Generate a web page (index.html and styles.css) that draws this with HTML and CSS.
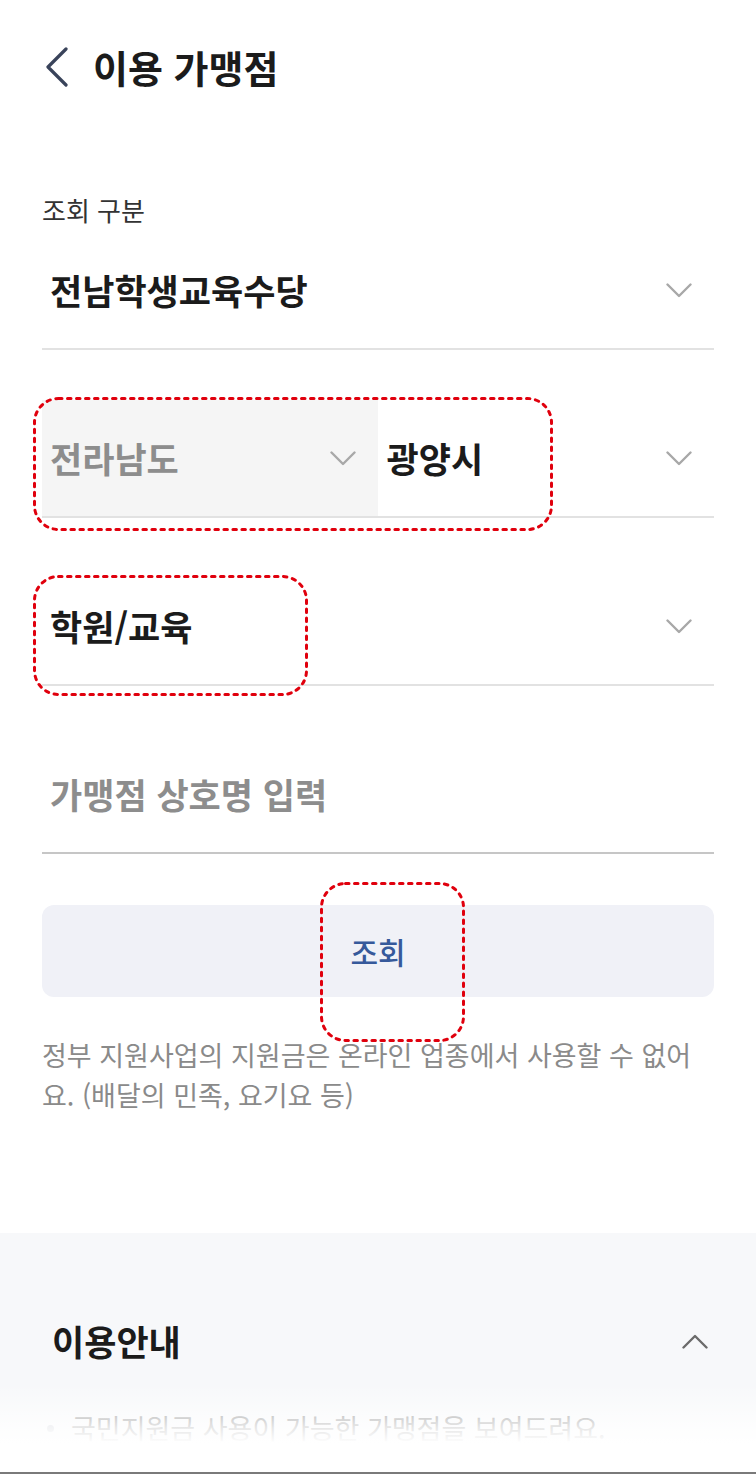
FILE: index.html
```html
<!DOCTYPE html>
<html lang="ko">
<head>
<meta charset="utf-8">
<title>이용 가맹점</title>
<link rel="stylesheet" href="styles.css">
</head>
<body>
<div class="page">
  <header class="top">
    <svg class="back" width="26" height="40" viewBox="0 0 26 40" aria-hidden="true">
      <path d="M22 2 L4 20 L22 38" fill="none" stroke="#39435a" stroke-width="3.2" stroke-linecap="round" stroke-linejoin="round"/>
    </svg>
    <h1 class="title">이용 가맹점</h1>
  </header>

  <main class="form">
    <div class="label">조회 구분</div>
    <div class="field">
      <div class="cell">
        <span class="value">전남학생교육수당</span>
        <svg class="chev" width="26" height="15" viewBox="0 0 26 15"><path d="M1.5 1.5 L13 13 L24.5 1.5"/></svg>
      </div>
    </div>

    <div class="field gap">
      <div class="cell disabled">
        <span class="value muted">전라남도</span>
        <svg class="chev" width="26" height="15" viewBox="0 0 26 15"><path d="M1.5 1.5 L13 13 L24.5 1.5"/></svg>
      </div>
      <div class="cell">
        <span class="value">광양시</span>
        <svg class="chev" width="26" height="15" viewBox="0 0 26 15"><path d="M1.5 1.5 L13 13 L24.5 1.5"/></svg>
      </div>
    </div>

    <div class="field gap">
      <div class="cell">
        <span class="value">학원/교육</span>
        <svg class="chev" width="26" height="15" viewBox="0 0 26 15"><path d="M1.5 1.5 L13 13 L24.5 1.5"/></svg>
      </div>
    </div>

    <div class="field gap input">
      <div class="cell">
        <span class="value muted">가맹점 상호명 입력</span>
      </div>
    </div>

    <button class="search" type="button">조회</button>

    <p class="note">정부 지원사업의 지원금은 온라인 업종에서 사용할 수 없어요. (배달의 민족, 요기요 등)</p>
  </main>

  <section class="guide">
    <div class="guide-head">
      <h2 class="guide-title">이용안내</h2>
      <svg class="chev up" width="26" height="15" viewBox="0 0 26 15"><path d="M1.5 13.5 L13 2 L24.5 13.5"/></svg>
    </div>
    <ul class="guide-list">
      <li>국민지원금 사용이 가능한 가맹점을 보여드려요.</li>
    </ul>
  </section>

  <svg class="mark mark-region" viewBox="0 0 520 134" aria-hidden="true"><rect x="1.5" y="1.5" width="517" height="131" rx="24"/></svg>
  <svg class="mark mark-category" viewBox="0 0 275 121" aria-hidden="true"><rect x="1.5" y="1.5" width="272" height="118" rx="24"/></svg>
  <svg class="mark mark-search" viewBox="0 0 145 160" aria-hidden="true"><rect x="1.5" y="1.5" width="142" height="157" rx="24"/></svg>
</div>
</body>
</html>
```
FILE: styles.css
```css
* { box-sizing: border-box; }

body {
  margin: 0;
  background: #ffffff;
  color: #1b1b1b;
  font-family: "Noto Sans CJK KR", "Noto Sans", sans-serif;
}

.page {
  position: relative;
  width: 756px;
  height: 1474px;
  overflow: hidden;
  display: flex;
  flex-direction: column;
}

/* header */
.top {
  height: 134px;
  display: flex;
  align-items: center;
  padding-left: 44px;
  gap: 23px;
  flex-shrink: 0;
}

.title {
  margin: 0;
  font-size: 38px;
  font-weight: 700;
  line-height: 50px;
  color: #1b1b1b;
}

/* form */
.form {
  padding: 61px 42px 0;
  flex-shrink: 0;
}

.label {
  font-size: 26px;
  line-height: 30px;
  color: #333333;
  margin-bottom: 7px;
}

.field {
  height: 118px;
  display: flex;
  border-bottom: 2px solid #e2e2e2;
}

.field.gap { margin-top: 50px; }

.field.input { border-bottom-color: #c6c6c6; }

.cell {
  flex: 1;
  display: flex;
  align-items: center;
  justify-content: space-between;
  padding: 0 22px 0 8px;
}

.cell + .cell { padding-left: 9px; }

.cell.disabled { background: #f5f5f5; }

.value {
  font-size: 35px;
  font-weight: 700;
  line-height: 46px;
  color: #1b1b1b;
}

.value.muted { color: #8d8d8d; }

.chev path {
  fill: none;
  stroke: #a8a8a8;
  stroke-width: 2.4;
  stroke-linecap: round;
  stroke-linejoin: round;
}

.chev.up path { stroke: #6b6b6b; }

.search {
  display: block;
  width: 100%;
  height: 92px;
  margin-top: 51px;
  border: 0;
  border-radius: 12px;
  background: #f0f1f7;
  color: #36599b;
  font-family: inherit;
  font-size: 30px;
  font-weight: 500;
  cursor: pointer;
}

.note {
  margin: 38px 0 0;
  font-size: 27px;
  line-height: 40px;
  color: #8a8a8a;
}

/* guide */
.guide {
  position: relative;
  flex: 1;
  margin-top: 118px;
  background: #f7f8fa;
  padding: 84px 48px 0 52px;
  border-bottom: 2px solid #7a7a7a;
}

.guide::after {
  content: "";
  position: absolute;
  left: 0;
  right: 0;
  bottom: 0;
  height: 88px;
  background: linear-gradient(to bottom, rgba(255,255,255,0) 0%, rgba(255,255,255,0.8) 50%, #ffffff 68%, #ffffff 100%);
}

.guide-head {
  display: flex;
  align-items: center;
  justify-content: space-between;
}

.guide-title {
  margin: 0;
  font-size: 35px;
  font-weight: 700;
  line-height: 48px;
  color: #1b1b1b;
}

.guide-list {
  list-style: none;
  margin: 43px 0 0 -5px;
  padding: 0;
}

.guide-list li {
  display: flex;
  align-items: center;
  gap: 17px;
  font-size: 27px;
  line-height: 40px;
  color: #8a8a8a;
}

.guide-list li::before {
  content: "";
  width: 7px;
  height: 7px;
  border-radius: 50%;
  background: #c8ccd4;
  flex-shrink: 0;
}

/* annotation marks */
.mark {
  position: absolute;
  overflow: visible;
}

.mark rect {
  fill: none;
  stroke: #e0000d;
  stroke-width: 3;
  stroke-dasharray: 3.5 5.5;
  stroke-linecap: round;
}

.mark-region { left: 33px; top: 397px; width: 520px; height: 134px; }
.mark-category { left: 33px; top: 575px; width: 275px; height: 121px; }
.mark-search { left: 320px; top: 882px; width: 145px; height: 160px; }
```
